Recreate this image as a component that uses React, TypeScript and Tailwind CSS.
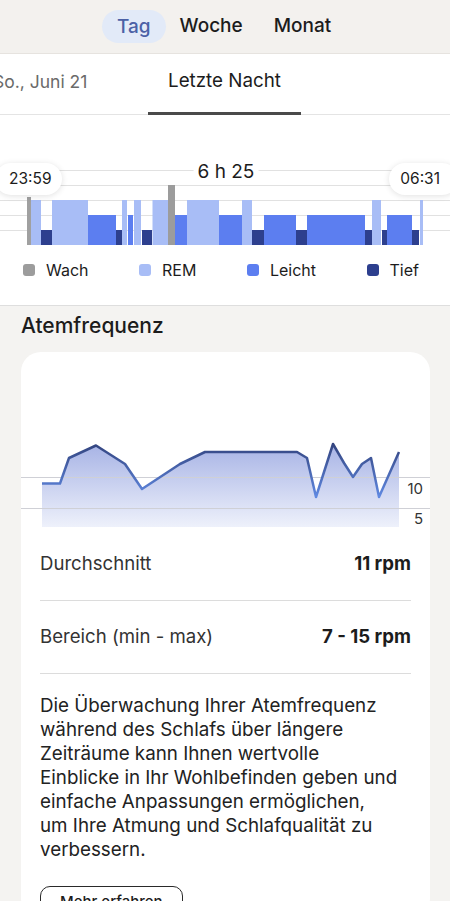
const segs: [number, number, string][] = [
  [31, 41, 'R'],
  [41, 52, 'T'],
  [52, 88, 'R'],
  [88, 116, 'L'],
  [116, 122, 'T'],
  [122, 127, 'R'],
  [128, 133, 'L'],
  [134, 141, 'R'],
  [142, 152, 'T'],
  [152.5, 168, 'R'],
  [168, 175, 'W'],
  [175, 187, 'L'],
  [187, 219, 'R'],
  [219, 242, 'L'],
  [242, 252, 'R'],
  [252, 264, 'T'],
  [264, 296, 'L'],
  [296, 307, 'T'],
  [307, 365, 'L'],
  [365, 372, 'T'],
  [372, 381, 'R'],
  [382, 387, 'T'],
  [387, 412, 'L'],
  [412, 419, 'T'],
  [420, 423, 'R'],
]

// top y within the 90px chart svg (starts at page y 160)
const levels: Record<string, { top: number; color: string }> = {
  W: { top: 25, color: '#9c9c9c' },
  R: { top: 40, color: '#a8bdf6' },
  L: { top: 55, color: '#5c7ef0' },
  T: { top: 70, color: '#2d3f8e' },
}

const legend = [
  { label: 'Wach', color: 'bg-[#9c9c9c]' },
  { label: 'REM', color: 'bg-[#a8bdf6]' },
  { label: 'Leicht', color: 'bg-[#5c7ef0]' },
  { label: 'Tief', color: 'bg-[#2d3f8e]' },
]

const pts: [number, number][] = [
  [21, 131.5],
  [39, 131.5],
  [48, 106],
  [75, 93.5],
  [104, 112],
  [121, 137],
  [159, 112],
  [184, 100],
  [276, 100],
  [286, 106],
  [295, 145],
  [312, 92],
  [323, 111],
  [332, 125],
  [341, 112],
  [350, 106],
  [358, 145],
  [378, 100],
]

const paragraph = [
  'Die Überwachung Ihrer Atemfrequenz',
  'während des Schlafs über längere',
  'Zeiträume kann Ihnen wertvolle',
  'Einblicke in Ihr Wohlbefinden geben und',
  'einfache Anpassungen ermöglichen,',
  'um Ihre Atmung und Schlafqualität zu',
  'verbessern.',
]

const font = { fontFamily: 'Inter, "Noto Sans", sans-serif' }

export default function App() {
  const line = pts.map((p) => p.join(',')).join(' ')
  const area = `${line} 378,175 21,175`

  return (
    <div className="w-[450px] h-[901px] overflow-hidden bg-[#f4f3f1] text-[#1c1c1c]" style={font}>
      {/* Period tabs */}
      <div className="h-[54px] bg-[#f3f1ee] border-b border-[#e6e3df] flex items-center pl-[102px]">
        <div className="flex items-center text-[19px] font-medium">
          <span className="px-[15px] h-[33px] leading-[33px] rounded-full bg-[#e2eaf8] text-[#4b61a6]">Tag</span>
          <span className="ml-[14px]">Woche</span>
          <span className="ml-[31px]">Monat</span>
        </div>
      </div>

      {/* Night overview */}
      <div className="bg-white border-b border-[#dedede]">
        <div className="h-[61px] flex items-end border-b border-[#e4e4e4] text-[18.8px]">
          <div className="w-[155px] -ml-[7px] h-full flex items-center pb-[4px] text-[17.5px] text-[#6a6a6a]">So., Juni 21</div>
          <div className="w-[153px] h-full flex items-center justify-center pb-[4px] border-b-[3px] border-[#4a4a4a] -mb-px">
            Letzte Nacht
          </div>
        </div>

        <div className="relative">
          <svg width="450" height="90" className="block mt-[45px]">
            {[10, 25, 40, 55, 70].map((y) => (
              <line key={y} x1="0" x2="450" y1={y + 0.5} y2={y + 0.5} stroke="#e1e1e1" strokeWidth="1" />
            ))}
            <rect x="27" y="37" width="4" height="48" fill="#a0a0a0" />
            {segs.map(([x0, x1, k], i) => (
              <rect key={i} x={x0} y={levels[k].top} width={x1 - x0} height={85 - levels[k].top} fill={levels[k].color} />
            ))}
          </svg>
          <div className="absolute left-1/2 -translate-x-1/2 top-[0px] bg-white px-[4px] text-[19px] leading-[24px] ml-[1px]">
            6 h 25
          </div>
          <div className="absolute -left-[5px] top-[3px] h-[32px] pl-[14px] pr-[10px] rounded-full bg-white shadow-[0_1px_6px_rgba(0,0,0,0.12)] flex items-center text-[15.5px]">
            23:59
          </div>
          <div className="absolute -right-[8px] top-[3px] h-[32px] pl-[11px] pr-[18px] rounded-full bg-white shadow-[0_1px_6px_rgba(0,0,0,0.12)] flex items-center text-[15.5px]">
            06:31
          </div>
        </div>

        <div className="flex justify-between pl-[23px] pr-[31px] pt-[10px] pb-[25px] text-[16px] leading-[20px]">
          {legend.map((l) => (
            <div key={l.label} className="flex items-center gap-[11px]">
              <span className={`w-[12px] h-[12px] rounded-[3px] ${l.color}`} />
              <span>{l.label}</span>
            </div>
          ))}
        </div>
      </div>

      {/* Respiratory rate */}
      <div className="px-[21px]">
        <h2 className="pt-[7px] text-[21px] leading-[25px] font-medium">Atemfrequenz</h2>

        <div className="mt-[14px] bg-white rounded-[20px] w-[409px]">
          <svg width="409" height="175" className="block overflow-visible">
            <defs>
              <linearGradient id="fillGrad" gradientUnits="userSpaceOnUse" x1="0" y1="92" x2="0" y2="175">
                <stop offset="0" stopColor="#a7b3e5" />
                <stop offset="1" stopColor="#eef1fb" />
              </linearGradient>
              <linearGradient id="lineGrad" gradientUnits="userSpaceOnUse" x1="0" y1="92" x2="0" y2="145">
                <stop offset="0" stopColor="#33447f" />
                <stop offset="1" stopColor="#6089e2" />
              </linearGradient>
            </defs>
            <polygon points={area} fill="url(#fillGrad)" />
            <line x1="0" x2="409" y1="125.5" y2="125.5" stroke="#cfd0d6" strokeWidth="1" />
            <line x1="0" x2="409" y1="156.5" y2="156.5" stroke="#cfd0d6" strokeWidth="1" />
            <polyline points={line} fill="none" stroke="url(#lineGrad)" strokeWidth="2.5" strokeLinejoin="round" />
            <text x="402" y="142" textAnchor="end" fontSize="15" fill="#333" style={font}>10</text>
            <text x="402" y="172" textAnchor="end" fontSize="15" fill="#333" style={font}>5</text>
          </svg>

          <div className="px-[19px]">
            <div className="h-[74px] flex items-center justify-between border-b border-[#dcdcdc] text-[18.6px]">
              <span className="text-[#333]">Durchschnitt</span>
              <span className="font-bold">11 rpm</span>
            </div>
            <div className="h-[73px] flex items-center justify-between border-b border-[#dcdcdc] text-[18.6px]">
              <span className="text-[#333]">Bereich (min - max)</span>
              <span className="font-bold">7 - 15 rpm</span>
            </div>

            <p className="pt-[20px] text-[18.8px] leading-[24px] text-[#222]">
              {paragraph.map((t) => (
                <span key={t} className="block">{t}</span>
              ))}
            </p>

            <button className="mt-[24px] h-[32px] px-[19px] border-[1.5px] border-[#2a2a2a] rounded-[10px] text-[15px] font-medium">
              Mehr erfahren
            </button>
          </div>
        </div>
      </div>
    </div>
  )
}
